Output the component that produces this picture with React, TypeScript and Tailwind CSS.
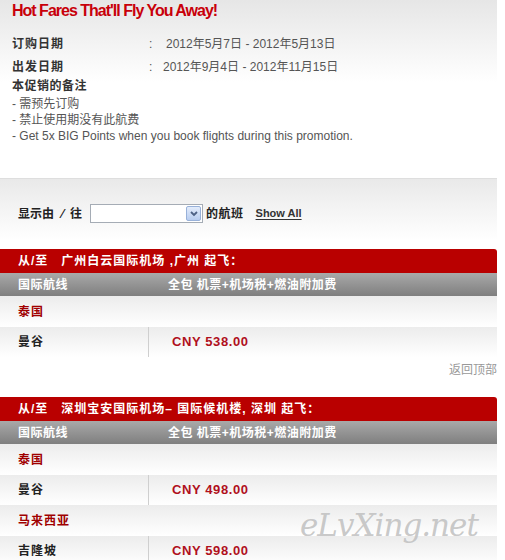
import { FC } from "react";

const cjk = "font-['Liberation_Sans','Noto_Sans_CJK_SC',sans-serif]";

interface fare {
  city: string;
  price: string;
}

interface country {
  name: string;
  fares: fare[];
}

interface section {
  from: string;
  countries: country[];
}

const sections: section[] = [
  {
    from: "从/至   广州白云国际机场 ,广州 起飞：",
    countries: [{ name: "泰国", fares: [{ city: "曼谷", price: "CNY 538.00" }] }],
  },
  {
    from: "从/至   深圳宝安国际机场– 国际候机楼, 深圳 起飞：",
    countries: [
      { name: "泰国", fares: [{ city: "曼谷", price: "CNY 498.00" }] },
      { name: "马来西亚", fares: [{ city: "吉隆坡", price: "CNY 598.00" }] },
    ],
  },
];

const Section: FC<{ data: section }> = ({ data }) => (
  <div className="w-[497px]">
    <div className="h-[24px] bg-[#b90000] rounded-tr-[3px] px-[18px] flex items-center text-white font-bold text-[12px] tracking-[1px] whitespace-pre">
      {data.from}
    </div>
    <div className="h-[23px] bg-gradient-to-b from-[#a9a9a9] to-[#7f7f7f] flex items-center text-white font-bold text-[12px] tracking-[0.5px]">
      <span className="w-[168px] pl-[18px]">国际航线</span>
      <span>全包 机票+机场税+燃油附加费</span>
    </div>
    {data.countries.map((c) => (
      <div key={c.name}>
        <div className="h-[31px] bg-gradient-to-b from-[#ececec] to-white flex items-center pl-[18px] text-[12px] font-bold tracking-[1px] text-[#a00000]">
          {c.name}
        </div>
        {c.fares.map((f) => (
          <div
            key={f.city}
            className="h-[30px] bg-gradient-to-b from-[#ececec] to-white flex items-center text-[12px] font-bold"
          >
            <span className="w-[149px] pl-[18px] text-[#222] tracking-[1px] self-stretch flex items-center border-r border-[#cfcfcf]">
              {f.city}
            </span>
            <span className="pl-[23px] text-[#b0101c] text-[13px] tracking-[0.6px]">{f.price}</span>
          </div>
        ))}
      </div>
    ))}
  </div>
);

const App: FC = () => {
  return (
    <div className={`relative w-[505px] h-[560px] overflow-hidden bg-white ${cjk}`}>
      <div className="w-[497px] bg-gradient-to-b from-[#e6e6e6] via-white to-white pl-[12px] pt-[1px] h-[165px]">
        <div className="text-[#c8000a] font-bold text-[16px] tracking-[-1px] leading-[20px]">
          Hot Fares That'll Fly You Away!
        </div>
        <div className="mt-[14px] flex items-center text-[12px] leading-[18px]">
          <span className="w-[137px] font-bold text-[#333] tracking-[1px]">订购日期</span>
          <span className="text-[#555] w-[17px]">:</span>
          <span className="text-[#555]">2012年5月7日 - 2012年5月13日</span>
        </div>
        <div className="mt-[5px] flex items-center text-[12px] leading-[18px]">
          <span className="w-[137px] font-bold text-[#333] tracking-[1px]">出发日期</span>
          <span className="text-[#555] w-[14px]">:</span>
          <span className="text-[#555]">2012年9月4日 - 2012年11月15日</span>
        </div>
        <div className="mt-[1px] font-bold text-[12px] leading-[18px] text-[#333] tracking-[0.5px]">本促销的备注</div>
        <div className="mt-[1px] text-[12px] leading-[16px] text-[#555]">
          <div>- 需预先订购</div>
          <div>- 禁止使用期没有此航费</div>
          <div>- Get 5x BIG Points when you book flights during this promotion.</div>
        </div>
      </div>
      <div className="mt-[13px] w-[497px] h-[62px] bg-gradient-to-b from-[#e9e9e9] to-white border-t border-[#dedede] flex items-center pl-[18px] pt-[8px] text-[12px]">
        <span className="font-bold text-[#222]">显示由</span>
        <span className="font-bold text-[#222] w-[13px] text-center ml-[2px]">⁄</span>
        <span className="font-bold text-[#222] ml-[1px] mr-[8px]">往</span>
        <div className="w-[113px] h-[19px] border border-[#a5acb5] bg-white flex justify-end items-center pr-[1px]">
          <div className="w-[15px] h-[15px] rounded-[2px] border border-[#98b1d9] bg-gradient-to-b from-[#e3ecfb] to-[#b8cdf0] flex items-center justify-center">
            <svg width="8" height="6" viewBox="0 0 8 6">
              <path d="M1 1 L4 4 L7 1" stroke="#4d6185" strokeWidth="1.8" fill="none" />
            </svg>
          </div>
        </div>
        <span className="font-bold text-[#222] ml-[3px] tracking-[0.5px]">的航班</span>
        <span className="ml-[12px] font-bold text-[11px] text-[#333] underline underline-offset-2">Show All</span>
      </div>
      <div className="mt-[9px]">
        <Section data={sections[0]} />
      </div>
      <div className="w-[497px] text-right text-[12px] text-[#999] mt-[5px] leading-[16px]">返回顶部</div>
      <div className="mt-[19px]">
        <Section data={sections[1]} />
      </div>
      <div className="absolute left-[300px] top-[510px] text-[31px] italic text-[#c2c2c2]/90 font-['DejaVu_Serif',serif] tracking-[-1px] leading-none">
        eLvXing.net
      </div>
    </div>
  );
};

export default App;
